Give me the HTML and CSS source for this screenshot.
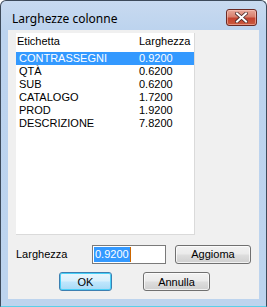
FILE: index.html
```html
<!DOCTYPE html>
<html lang="it">
<head>
    <meta charset="UTF-8">
    <title>Larghezze colonne</title>
    <link rel="stylesheet" href="styles.css">
</head>
<body>

    <div class="window">
        <div class="titlebar">
            <span class="title">Larghezze colonne</span>
            <button class="close-btn" aria-label="Chiudi">
                <svg width="13" height="11" viewBox="0 0 13 11">
                    <path d="M2 1.5 L11 9.5 M11 1.5 L2 9.5" stroke="#4a2a2a" stroke-width="3.6" stroke-linecap="square"/>
                    <path d="M2 1.5 L11 9.5 M11 1.5 L2 9.5" stroke="#ffffff" stroke-width="2" stroke-linecap="square"/>
                </svg>
            </button>
        </div>

        <div class="client">
            <div class="list-box">
                <div class="list-header">
                    <span>Etichetta</span>
                    <span>Larghezza</span>
                </div>
                <!-- righe delle colonne -->
                <div class="list-row selected"><span>CONTRASSEGNI</span><span>0.9200</span></div>
                <div class="list-row"><span>QTÀ</span><span>0.6200</span></div>
                <div class="list-row"><span>SUB</span><span>0.6200</span></div>
                <div class="list-row"><span>CATALOGO</span><span>1.7200</span></div>
                <div class="list-row"><span>PROD</span><span>1.9200</span></div>
                <div class="list-row"><span>DESCRIZIONE</span><span>7.8200</span></div>
            </div>

            <div class="edit-row">
                <label class="edit-label">Larghezza</label>
                <div class="text-input"><span class="sel-text">0.9200</span><span class="caret"></span></div>
                <button class="btn btn-update">Aggioma</button>
            </div>

            <div class="button-row">
                <button class="btn btn-default">OK</button>
                <button class="btn btn-cancel">Annulla</button>
            </div>
        </div>
    </div>

</body>
</html>
```

FILE: styles.css
```css
body {
    margin: 0;
    background: #ffffff;
    font-family: 'Liberation Sans', Arial, sans-serif;
    font-size: 11px;
    color: #000;
}

.window {
    width: 267px;
    height: 307px;
    box-sizing: border-box;
    border: 1px solid #3d4a5a;
    border-bottom-color: #5ad0e8;
    border-radius: 6px 6px 0 0;
    background: linear-gradient(#c8daf0, #bcd3ee 30px, #bdd4ee);
    display: flex;
    flex-direction: column;
    overflow: hidden;
}

.titlebar {
    height: 29px;
    display: flex;
    align-items: flex-start;
    justify-content: space-between;
    padding: 0 9px 0 11px;
}

.title {
    font-family: 'Noto Sans', 'Open Sans', sans-serif;
    font-size: 12px;
    margin-top: 9px;
    color: #000;
}

.close-btn {
    width: 31px;
    height: 17px;
    margin-top: 8px;
    padding: 0;
    border: 1px solid #6b2a24;
    border-radius: 3px;
    background: linear-gradient(#e8a89a, #d8806e 45%, #c4432f 55%, #c95a3e);
    box-shadow: inset 0 0 0 1px rgba(255, 210, 200, 0.5);
    display: flex;
    align-items: center;
    justify-content: center;
}

.client {
    flex: 1;
    margin: 0 7px 7px 7px;
    background: #f0f0f0;
    display: flex;
    flex-direction: column;
    padding: 3px 0 0 8px;
}

.list-box {
    width: 179px;
    height: 202px;
    box-sizing: border-box;
    background: #fff;
    border-right: 1px solid #dadada;
    border-bottom: 1px solid #dadada;
}

.list-header,
.list-row {
    display: grid;
    grid-template-columns: 122px 1fr;
}

.list-header {
    height: 19px;
    line-height: 17px;
    padding-left: 1px;
}

.list-row {
    height: 13px;
    line-height: 13px;
}

.list-row span:first-child {
    padding-left: 3px;
}

.list-row span:last-child {
    padding-left: 1px;
}

.list-row.selected {
    background: #3399ff;
    color: #fff;
}

.edit-row {
    display: flex;
    align-items: center;
    margin-top: 9px;
    height: 20px;
}

.edit-label {
    width: 76px;
}

.text-input {
    width: 74px;
    height: 19px;
    box-sizing: border-box;
    border: 1px solid #7a7a7a;
    background: #fff;
    display: flex;
    align-items: center;
    padding-left: 1px;
}

.sel-text {
    background: #3399ff;
    color: #fff;
    line-height: 15px;
    padding: 0 1px;
}

.caret {
    width: 1px;
    height: 15px;
    background: #cc6600;
}

.btn {
    font-family: 'Liberation Sans', Arial, sans-serif;
    font-size: 11px;
    color: #000;
    height: 19px;
    padding: 0;
    border: 1px solid #707070;
    border-radius: 3px;
    background: linear-gradient(#f2f2f2, #ebebeb 45%, #dddddd 55%, #cfcfcf);
    box-shadow: inset 0 0 0 1px rgba(255, 255, 255, 0.7);
}

.btn-update {
    width: 76px;
    margin-left: 9px;
}

.button-row {
    display: flex;
    gap: 31px;
    margin-top: 8px;
    padding-left: 43px;
}

.btn-default {
    width: 53px;
    border-color: #3c7fb1;
    background: linear-gradient(#eaf6fd, #d9f0fc 45%, #bee6fd 55%, #a7d9f5);
    box-shadow: inset 0 0 0 1px #48d0f8;
}

.btn-cancel {
    width: 67px;
}
```
